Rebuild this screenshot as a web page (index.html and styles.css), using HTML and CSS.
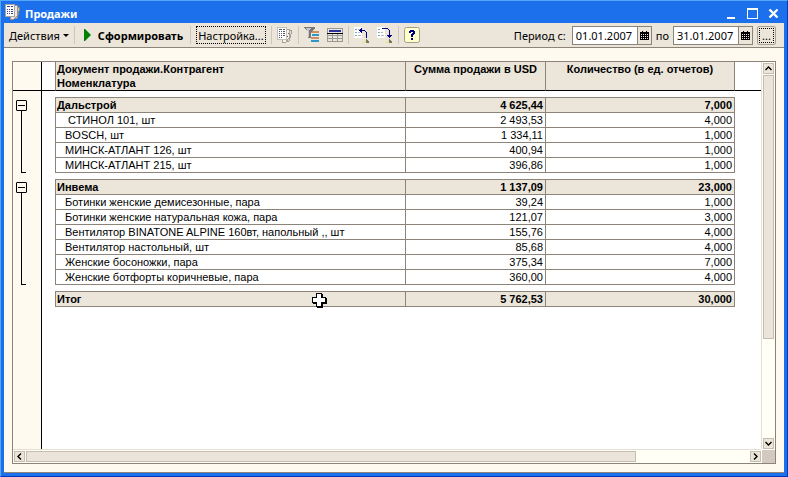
FILE: index.html
```html
<!DOCTYPE html>
<html lang="ru">
<head>
<meta charset="utf-8">
<title>Продажи</title>
<link rel="stylesheet" href="styles.css">
</head>
<body>
<div class="window">
  <header class="titlebar">
    <svg class="app-icon" width="16" height="16" viewBox="0 0 16 16" shape-rendering="crispEdges">
      <path d="M10 2l5 2-3 10-4 1z" fill="#c8c4bc" stroke="#8c8c88"/>
      <path d="M5 1h7v11l-3 3H5z" fill="#e8e6e0" stroke="#98948c"/>
      <path d="M.5.5h9v12h-9z" fill="#fff" stroke="#a8a49c"/>
      <path d="M2 2h3v1H2zM6 2h2v1H6zM2 5h1v1H2zM4 5h1v1H4zM6 5h2v1H6zM2 7h1v1H2zM4 7h1v1H4zM6 7h2v1H6zM2 9h1v1H2zM4 9h1v1H4zM6 9h2v1H6z" fill="#34408c"/>
    </svg>
    <h1 class="title">Продажи</h1>
    <button class="caption" type="button" aria-label="Свернуть"><svg width="11" height="11" viewBox="0 0 11 11"><path d="M1 9h8v2H1z" fill="#fff"/></svg></button>
    <button class="caption" type="button" aria-label="Развернуть"><svg width="11" height="11" viewBox="0 0 11 11" shape-rendering="crispEdges"><path d="M0 0h11v11H0zM1 2v8h9V2z" fill="#fff" fill-rule="evenodd"/></svg></button>
    <button class="caption" type="button" aria-label="Закрыть"><svg width="11" height="11" viewBox="0 0 11 11"><path d="M1.500 1.500l8 8M9.500 1.500l-8 8" stroke="#fff" stroke-width="2.400"/></svg></button>
  </header>

  <div class="toolbar">
    <button class="tool menu" type="button">Действия<svg width="6" height="3" viewBox="0 0 6 3"><path d="M0 0h6L3 3z"/></svg></button>
    <span class="sep"></span>
    <button class="tool run" type="button"><svg width="7" height="12" viewBox="0 0 7 12"><path d="M0 0h1l6 6-6 6H0z" fill="#008000"/></svg>Сформировать</button>
    <span class="sep"></span>
    <button class="tool setup" type="button">Настройка...</button>
    <span class="sep"></span>
    <button class="tool icon" type="button" aria-label="Новый отчет"><svg width="16" height="16" viewBox="0 0 16 16" shape-rendering="crispEdges">
      <path d="M10 2l5 2-3 10-4 1z" fill="#e4e0d8" stroke="#a09c94"/>
      <path d="M5 2h7v9l-3 4H5z" fill="#f4f2ec" stroke="#a8a49c"/>
      <path d="M.5.5h9v12h-9z" fill="#fff" stroke="#c4c0b8"/>
      <path d="M2 2h3v1H2zM6 2h2v1H6zM2 4h1v1H2zM4 4h1v1H4zM6 4h2v1H6zM2 6h1v1H2zM4 6h1v1H4zM6 6h2v1H6zM2 8h1v1H2zM4 8h1v1H4zM6 8h2v1H6zM2 10h1v1H2zM4 10h1v1H4zM11 6h1v1h-1zM10 9h1v1h-1z" fill="#50586c"/>
    </svg></button>
    <span class="sep"></span>
    <button class="tool icon" type="button" aria-label="Отбор"><svg width="16" height="16" viewBox="0 0 16 16" shape-rendering="crispEdges">
      <path d="M7 4h8v2H7zM7 10h8v2H7z" fill="#cc9060"/><path d="M8 7h7v2H8zM7 13h8v2H7z" fill="#2c98c8"/>
      <path d="M0 0h11v1L7 5v6H4V5L0 1z" fill="#787878"/><path d="M2 1h5L5 4v6H4V5z" fill="#c8c8c8"/>
    </svg></button>
    <button class="tool icon" type="button" aria-label="Таблица"><svg width="16" height="16" viewBox="0 0 16 16" shape-rendering="crispEdges">
      <path d="M0 1h16v14H0z" fill="#9c9890"/><path d="M1 2h14v4H1z" fill="#e8e8e8"/><path d="M2 3h12v2H2z" fill="#30309c"/><path d="M0 6h16v1H0z" fill="#000"/>
      <path d="M1 7h4v1H1zM6 7h4v1H6zM11 7h4v1h-4zM1 9h4v2H1zM6 9h4v2H6zM11 9h4v2h-4zM1 12h4v2H1zM6 12h4v2H6zM11 12h4v2h-4z" fill="#e8e6e0"/>
    </svg></button>
    <span class="sep"></span>
    <button class="tool icon" type="button" aria-label="Назад"><svg width="16" height="16" viewBox="0 0 16 16" shape-rendering="crispEdges">
      <path d="M0 0h8v11H0z" fill="#fff"/><path d="M1 2h2v1H1zM1 5h2v1H1zM1 8h2v1H1z" fill="#70b0b8"/><path d="M4 2h3v1H4zM4 5h2v1H4zM4 8h3v1H4z" fill="#b8b8c4"/>
      <path d="M5 3h1V2h1V1h1v2h3v1h1v1h1v6h-1V5h-1V4H8v2H7V5H6V4H5z" fill="#000080"/>
      <path d="M12 12h1v1h1v1h1v2H8v-1h2v-1h1v-1h1z" fill="#7c7868"/><path d="M11 13h1v3H8v-1h2v-1h1z" fill="#e8e490"/>
    </svg></button>
    <button class="tool icon" type="button" aria-label="Вперед"><svg width="16" height="16" viewBox="0 0 16 16" shape-rendering="crispEdges">
      <path d="M0 0h8v11H0z" fill="#fff"/><path d="M1 2h2v1H1zM1 5h2v1H1zM1 8h2v1H1z" fill="#70b0b8"/><path d="M4 5h2v1H4zM4 8h3v1H4z" fill="#b8b8c4"/>
      <path d="M5 1h6v1h1v1h1v5h2v1h-1v1h-1v1h-1v-1h-1V9h-1V8h2V3h-1V2H5z" fill="#000080"/>
      <path d="M12 12h1v1h1v1h1v2H8v-1h2v-1h1v-1h1z" fill="#7c7868"/><path d="M11 13h1v3H8v-1h2v-1h1z" fill="#e8e490"/>
    </svg></button>
    <span class="sep"></span>
    <button class="tool icon" type="button" aria-label="Справка"><svg width="16" height="16" viewBox="0 0 16 16">
      <rect x=".5" y=".5" width="15" height="15" rx="2" fill="#ffffc8" stroke="#a09c90"/>
      <path d="M6 3h4v1h1v3h-1v1H9v2H7V7h1V6h1V5H7v1H5V4h1zM7 11h2v2H7z" fill="#000080" shape-rendering="crispEdges"/>
    </svg></button>

    <div class="period">
      <label class="from" for="from">Период с:</label>
      <span class="date"><input id="from" type="text" value="01.01.2007"><button type="button" aria-label="Календарь: начало"><svg width="9" height="9" viewBox="0 0 9 9" shape-rendering="crispEdges"><path d="M0 1h9v8H0zM1 3v1h1V3zM3 3v1h1V3zM5 3v1h1V3zM7 3v1h1V3zM1 5v1h1V5zM3 5v1h1V5zM5 5v1h1V5zM7 5v1h1V5zM1 7v1h1V7zM3 7v1h1V7zM5 7v1h1V7zM7 7v1h1V7zM2 0h1v1H2zM6 0h1v1H6z" fill-rule="evenodd"/></svg></button></span>
      <label for="to">по</label>
      <span class="date"><input id="to" type="text" value="31.01.2007"><button type="button" aria-label="Календарь: конец"><svg width="9" height="9" viewBox="0 0 9 9" shape-rendering="crispEdges"><path d="M0 1h9v8H0zM1 3v1h1V3zM3 3v1h1V3zM5 3v1h1V3zM7 3v1h1V3zM1 5v1h1V5zM3 5v1h1V5zM5 5v1h1V5zM7 5v1h1V5zM1 7v1h1V7zM3 7v1h1V7zM5 7v1h1V7zM7 7v1h1V7zM2 0h1v1H2zM6 0h1v1H6z" fill-rule="evenodd"/></svg></button></span>
      <button class="pick" type="button" aria-label="Выбрать период"><span>...</span></button>
    </div>
  </div>

  <main class="content">
    <div class="sheet">
      <div class="view">
      <table class="report">
        <colgroup><col class="c-gutter"><col class="c-gap"><col class="c-name"><col class="c-sum"><col class="c-qty"><col></colgroup>
        <thead>
          <tr>
            <td class="gutter"></td><td></td>
            <th scope="col" class="name">Документ продажи.Контрагент<br>Номенклатура</th>
            <th scope="col">Сумма продажи в USD</th>
            <th scope="col" class="last">Количество (в ед. отчетов)</th>
            <td></td>
          </tr>
        </thead>
        <tbody>
          <tr class="space first"><td class="gutter"></td><td colspan="5"></td></tr>
        </tbody>
        <tbody>
          <tr class="group"><td class="gutter bracket" rowspan="6"><button class="toggle" type="button" aria-label="Свернуть Дальстрой"></button></td><td></td><th scope="row">Дальстрой</th><td class="num">4 625,44</td><td class="num last">7,000</td><td></td></tr>
          <tr class="item"><td></td><td class="name">&nbsp;СТИНОЛ 101, шт</td><td class="num">2 493,53</td><td class="num last">4,000</td><td></td></tr>
          <tr class="item"><td></td><td class="name">BOSCH, шт</td><td class="num">1 334,11</td><td class="num last">1,000</td><td></td></tr>
          <tr class="item"><td></td><td class="name">МИНСК-АТЛАНТ 126, шт</td><td class="num">400,94</td><td class="num last">1,000</td><td></td></tr>
          <tr class="item"><td></td><td class="name">МИНСК-АТЛАНТ 215, шт</td><td class="num">396,86</td><td class="num last">1,000</td><td></td></tr>
          <tr class="space"><td></td><td class="edge" colspan="3"></td><td></td></tr>
        </tbody>
        <tbody>
          <tr class="group"><td class="gutter bracket" rowspan="8"><button class="toggle" type="button" aria-label="Свернуть Инвема"></button></td><td></td><th scope="row">Инвема</th><td class="num">1 137,09</td><td class="num last">23,000</td><td></td></tr>
          <tr class="item"><td></td><td class="name">Ботинки женские демисезонные, пара</td><td class="num">39,24</td><td class="num last">1,000</td><td></td></tr>
          <tr class="item"><td></td><td class="name">Ботинки женские натуральная кожа, пара</td><td class="num">121,07</td><td class="num last">3,000</td><td></td></tr>
          <tr class="item"><td></td><td class="name">Вентилятор BINATONE ALPINE 160вт, напольный ,, шт</td><td class="num">155,76</td><td class="num last">4,000</td><td></td></tr>
          <tr class="item"><td></td><td class="name">Вентилятор настольный, шт</td><td class="num">85,68</td><td class="num last">4,000</td><td></td></tr>
          <tr class="item"><td></td><td class="name">Женские босоножки, пара</td><td class="num">375,34</td><td class="num last">7,000</td><td></td></tr>
          <tr class="item"><td></td><td class="name">Женские ботфорты коричневые, пара</td><td class="num">360,00</td><td class="num last">4,000</td><td></td></tr>
          <tr class="space"><td></td><td class="edge" colspan="3"></td><td></td></tr>
        </tbody>
        <tfoot>
          <tr class="group"><td class="gutter"></td><td></td><th scope="row" class="total">Итог<svg class="cursor" width="16" height="16" viewBox="0 0 16 16" shape-rendering="crispEdges"><path d="M5 1h6v4h4v6h-4v4H5v-4H1V5h4z"/><path d="M4 0h6v4h4v6h-4v4H4v-4H0V4h4z"/><path d="M5 1h4v4h4v4H9v4H5V9H1V5h4z" fill="#fff"/></svg></th><td class="num">5 762,53</td><td class="num last">30,000</td><td></td></tr>
          <tr class="space"><td class="gutter"></td><td></td><td class="edge" colspan="3"></td><td></td></tr>
        </tfoot>
      </table>
      <div class="rest"></div>
      </div>
      <div class="scroll vertical">
        <button type="button" aria-label="Вверх"><svg width="7" height="5" viewBox="0 0 7 5"><path d="M.5 4l3-3 3 3"/></svg></button>
        <span class="thumb"></span><span class="track"></span>
        <button type="button" aria-label="Вниз"><svg width="7" height="5" viewBox="0 0 7 5"><path d="M.5 1l3 3 3-3"/></svg></button>
      </div>
      <div class="scroll horizontal">
        <button type="button" aria-label="Влево"><svg width="5" height="7" viewBox="0 0 5 7"><path d="M4 .5l-3 3 3 3"/></svg></button>
        <span class="thumb"></span><span class="track"></span>
        <button type="button" aria-label="Вправо"><svg width="5" height="7" viewBox="0 0 5 7"><path d="M1 .5l3 3-3 3"/></svg></button>
      </div>
      <div class="corner"></div>
    </div>
  </main>
</div>
</body>
</html>
```
FILE: styles.css
```css
* { box-sizing: border-box; }

body {
  margin: 0;
  font: 11px/13px "Noto Sans", "Open Sans", sans-serif;
  color: #000;
}

button, input { font: inherit; color: inherit; margin: 0; padding: 0; }
button { border: 0; background: none; }
svg { display: block; flex: none; }

.window {
  display: flex;
  flex-direction: column;
  min-height: 100vh;
  padding: 0 3px 3px;
  background: #1c70ec;
  border: 1px solid;
  border-color: #54a8fc #0038b8 #0038b8 #54a8fc;
}

/* Title bar */
.titlebar {
  display: flex;
  align-items: center;
  height: 22px;
  padding: 0 5px 0 1px;
}
.title {
  flex: 1;
  margin: 2px 0 0 4px;
  font-size: 11px;
  font-weight: bold;
  color: #fff;
}
.caption {
  display: flex;
  justify-content: center;
  width: 11px;
  margin: 2px 0 0 10px;
}

/* Toolbar */
.toolbar {
  display: flex;
  align-items: center;
  height: 25px;
  padding: 0 8px 0 5px;
  background: #ebe5da;
  border-bottom: 1px solid #8c8478;
}
.tool { display: flex; align-items: center; white-space: nowrap; }
.menu { gap: 3px; }
.run { gap: 7px; padding: 0 2px 0 4px; font-weight: bold; }
.setup { height: 18px; padding: 0 1px; border: 1px dotted #000; }
.icon + .icon { margin-left: 7px; }
.sep { width: 1px; height: 18px; margin: 0 5px; background: #cdc6ba; }

.period { display: flex; align-items: center; gap: 4px; margin-left: auto; white-space: nowrap; }
.from { margin-right: 2px; }
.date {
  display: flex;
  height: 19px;
  border: 1px solid #8c8478;
  background: #fff;
}
.date input { width: 64px; padding-left: 3px; border: 0; background: none; outline: 0; }
.date button {
  display: flex;
  align-items: center;
  justify-content: center;
  width: 14px;
  border-left: 1px solid #8c8478;
  background: #ebe5da;
}
.pick {
  width: 19px;
  height: 19px;
  padding: 1px;
  border: 1px solid #a8a094;
  border-radius: 2px;
}
.pick span { display: block; height: 15px; border: 1px dotted #000; }

/* Report area */
.content {
  display: flex;
  flex: 1;
  padding: 13px 8px 8px;
  background: #fffaf0;
  border-bottom: 1px solid #8c8478;
}
.sheet {
  display: grid;
  flex: 1;
  grid-template-columns: minmax(0, 1fr) 14px;
  grid-template-rows: 1fr 14px;
  border: 1px solid #8c8478;
  background: #fff;
}
.view { display: flex; flex-direction: column; }
.rest {
  flex: 1;
  width: 29px;
  background: #fffaf0;
  border-right: 1px solid #000;
}

.report {
  width: 100%;
  table-layout: fixed;
  border-spacing: 0;
  font: 11px/14px "Liberation Sans", Arial, sans-serif;
}
.c-gutter { width: 29px; }
.c-gap { width: 13px; }
.c-name { width: 350px; }
.c-sum { width: 140px; }
.c-qty { width: 190px; }

.report td, .report th { padding: 0; text-align: left; vertical-align: top; white-space: nowrap; }
.report .gutter { background-color: #fffaf0; border-right: 1px solid #000; }

.report thead td, .report thead th { height: 29px; border-bottom: 1px solid #000; }
.report thead th {
  background: #ebe5da;
  border-left: 1px solid #8c8478;
  text-align: center;
}
.report thead .name { padding-left: 1px; text-align: left; }
.report .last { border-right: 1px solid #8c8478; }

.report .group th, .report .group .num,
.report .item .name, .report .item .num {
  height: 15px;
  border-top: 1px solid #8c8478;
  border-left: 1px solid #8c8478;
}
.report .group th, .report .group .num { background: #ebe5da; font-weight: bold; }
.report .group th { padding-left: 1px; }
.report .item .name { padding-left: 9px; }
.report .num { padding-right: 2px; text-align: right; }

.report .space td { height: 7px; }
.report .first td { height: 6px; }
.report .edge { border-top: 1px solid #8c8478; }

.report .bracket {
  padding: 3px 0 0 3px;
  background-image: linear-gradient(#000, #000), linear-gradient(#000, #000);
  background-repeat: no-repeat;
  background-position: left 8px top 14px, left 8px bottom 6px;
  background-size: 1px calc(100% - 20px), 5px 1px;
}
.toggle {
  display: block;
  width: 11px;
  height: 11px;
  border: 1px solid #000;
  border-radius: 1px;
  background: linear-gradient(#000, #000) center / 7px 1px no-repeat;
}

.report .total { position: relative; }
.cursor { position: absolute; left: 256px; top: 1px; }

/* Scroll bars */
.scroll { display: flex; gap: 1px; padding: 1px; background: #fffff6; }
.vertical { flex-direction: column; border-left: 1px solid #e4dfd3; padding-bottom: 0; }
.horizontal { border-top: 1px solid #e4dfd3; padding-right: 0; }
.scroll button {
  display: flex;
  align-items: center;
  justify-content: center;
  flex: none;
  width: 11px;
  height: 11px;
  border: 1px solid #c4bdb0;
  background: #ebe5da;
}
.scroll path { fill: none; stroke: #000; stroke-width: 1.400; }
.thumb { border: 1px solid #c4bdb0; background: #ebe4da; }
.vertical .thumb { flex: 265; width: 11px; }
.vertical .track { flex: 98; }
.horizontal .thumb { flex: 611; height: 11px; }
.horizontal .track { flex: 112; }
.corner { margin: 1px 0 0 1px; background: #d2cabe; }
```
